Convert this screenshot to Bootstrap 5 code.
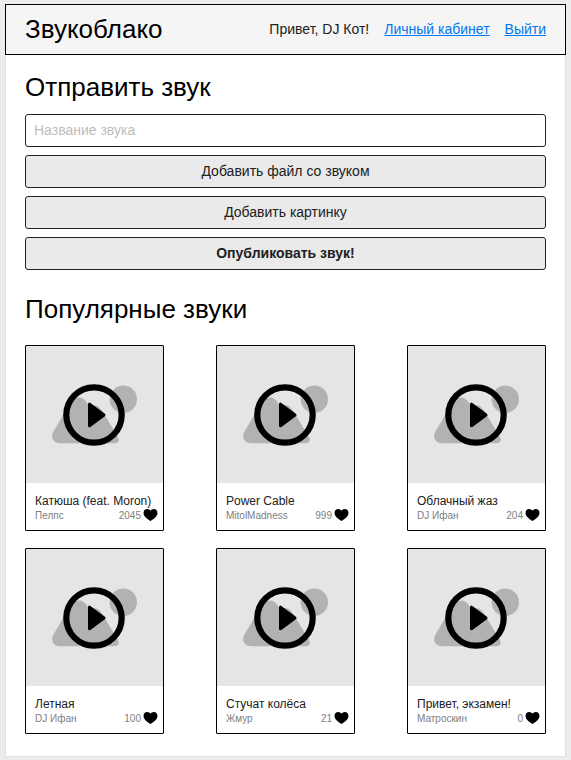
<!DOCTYPE html>
<html lang="ru">
<head>
<meta charset="utf-8">
<meta name="viewport" content="width=device-width, initial-scale=1">
<title>Звукоблако</title>
<link href="https://cdn.jsdelivr.net/npm/bootstrap@5.3.0/dist/css/bootstrap.min.css" rel="stylesheet">
<style>
body { background: #ececec; font-family: "Liberation Sans", Arial, sans-serif; font-size: 14px; line-height: 20px; color: #212121; padding: 4px 5px 3px; }
.page { border: 1px solid #e0e0e0; border-top: 0; background: #fff; }
.site-header { background: #f5f5f5; border: 1px solid #000; margin: 0 -1px; padding: 0 19px 2px; height: 51px; }
h1, h2 { font-size: 26px; line-height: 30px; font-weight: 400; color: #000; margin: 0; }
.site-header nav { gap: 15px; }
a { color: #0275f0; }
.content { padding: 17px 19px 22px; }
.content h2 { margin-bottom: 12px; }
.content .popular { margin: 24px 0 21px; }
.field { height: 33px; border: 1px solid #212121; border-radius: 3px; font-size: 14px; line-height: 20px; padding: 4px 8px 6px; color: #212121; }
.field::placeholder { color: #bdbdbd; }
.btn.field { background: #eaeaea; }
.sounds { display: grid; grid-template-columns: repeat(auto-fill, 139px); justify-content: space-between; row-gap: 17px; }
.sound { border: 1px solid #000; border-radius: 1px; }
.play { background: #e5e5e5; }
.play svg { width: 100%; }
.info { padding: 10px 5px 8px 9px; }
.sound-name { font-size: 12px; line-height: 16px; font-weight: 400; color: #212121; margin: 0; }
.meta { font-size: 10px; line-height: 13px; color: #808080; }
.like { gap: 2px; color: inherit; }
.like svg { width: 15px; height: 13px; }
</style>
</head>
<body>
<svg class="d-none" aria-hidden="true">
<symbol id="cover" viewBox="0 0 137 137">
<g fill="#b2b2b2"><circle cx="97.3" cy="53.3" r="13.7"/>
<path d="M27.2 86L44.5 56.5Q48 51.5 53 51.5Q57.5 51.5 60.5 56L64 61.5Q70 56 76 64.5L92 91Q94.5 97 88.5 97.3H34.5C27 97.3 24.5 91 27.2 86Z"/></g>
<circle cx="68" cy="69" r="27.7" fill="none" stroke="#000" stroke-width="6.2"/>
<path d="M63.5 58.2V79.8L78 69Z" stroke="#000" stroke-width="3" stroke-linejoin="round"/>
</symbol>
<symbol id="heart" viewBox="0 0 15 14"><path d="M7.5 13C5.5 11.5 0 8.5 0 4.2C0 1.7 1.7 0 3.9 0C5.5 0 6.8.8 7.5 2C8.2.8 9.5 0 11.1 0C13.3 0 15 1.7 15 4.2C15 8.5 9.5 11.5 7.5 13Z"/></symbol>
</svg>
<div class="page">
<header class="site-header d-flex align-items-center justify-content-between">
<h1>Звукоблако</h1>
<nav class="d-flex"><span>Привет, DJ Кот!</span><a href="#">Личный кабинет</a><a href="#">Выйти</a></nav>
</header>
<main class="content">
<h2>Отправить звук</h2>
<form class="d-grid gap-2">
<input type="text" class="form-control field" placeholder="Название звука" aria-label="Название звука">
<button type="button" class="btn field">Добавить файл со звуком</button>
<button type="button" class="btn field">Добавить картинку</button>
<button type="button" class="btn field fw-bold">Опубликовать звук!</button>
</form>
<h2 class="popular">Популярные звуки</h2>
<div class="sounds">
<article class="sound"><button class="play d-block w-100 border-0 p-0" aria-label="Слушать Катюша"><svg class="d-block" viewBox="0 0 137 137"><use href="#cover"/></svg></button><div class="info"><h3 class="sound-name text-nowrap">Катюша (feat. Moron)</h3><div class="meta d-flex justify-content-between"><span>Пелпс</span><button class="like d-flex align-items-start border-0 p-0 bg-transparent" aria-label="Нравится: 2045">2045<svg fill="#000"><use href="#heart"/></svg></button></div></div></article>
<article class="sound"><button class="play d-block w-100 border-0 p-0" aria-label="Слушать Power Cable"><svg class="d-block" viewBox="0 0 137 137"><use href="#cover"/></svg></button><div class="info"><h3 class="sound-name text-nowrap">Power Cable</h3><div class="meta d-flex justify-content-between"><span>MitolMadness</span><button class="like d-flex align-items-start border-0 p-0 bg-transparent" aria-label="Нравится: 999">999<svg fill="#000"><use href="#heart"/></svg></button></div></div></article>
<article class="sound"><button class="play d-block w-100 border-0 p-0" aria-label="Слушать Облачный жаз"><svg class="d-block" viewBox="0 0 137 137"><use href="#cover"/></svg></button><div class="info"><h3 class="sound-name text-nowrap">Облачный жаз</h3><div class="meta d-flex justify-content-between"><span>DJ Ифан</span><button class="like d-flex align-items-start border-0 p-0 bg-transparent" aria-label="Нравится: 204">204<svg fill="#000"><use href="#heart"/></svg></button></div></div></article>
<article class="sound"><button class="play d-block w-100 border-0 p-0" aria-label="Слушать Летная"><svg class="d-block" viewBox="0 0 137 137"><use href="#cover"/></svg></button><div class="info"><h3 class="sound-name text-nowrap">Летная</h3><div class="meta d-flex justify-content-between"><span>DJ Ифан</span><button class="like d-flex align-items-start border-0 p-0 bg-transparent" aria-label="Нравится: 100">100<svg fill="#000"><use href="#heart"/></svg></button></div></div></article>
<article class="sound"><button class="play d-block w-100 border-0 p-0" aria-label="Слушать Стучат колёса"><svg class="d-block" viewBox="0 0 137 137"><use href="#cover"/></svg></button><div class="info"><h3 class="sound-name text-nowrap">Стучат колёса</h3><div class="meta d-flex justify-content-between"><span>Жмур</span><button class="like d-flex align-items-start border-0 p-0 bg-transparent" aria-label="Нравится: 21">21<svg fill="#000"><use href="#heart"/></svg></button></div></div></article>
<article class="sound"><button class="play d-block w-100 border-0 p-0" aria-label="Слушать Привет, экзамен!"><svg class="d-block" viewBox="0 0 137 137"><use href="#cover"/></svg></button><div class="info"><h3 class="sound-name text-nowrap">Привет, экзамен!</h3><div class="meta d-flex justify-content-between"><span>Матроскин</span><button class="like d-flex align-items-start border-0 p-0 bg-transparent" aria-label="Нравится: 0">0<svg fill="#000"><use href="#heart"/></svg></button></div></div></article>
</div>
</main>
</div>
<script src="https://cdn.jsdelivr.net/npm/bootstrap@5.3.0/dist/js/bootstrap.bundle.min.js"></script>
</body>
</html>
